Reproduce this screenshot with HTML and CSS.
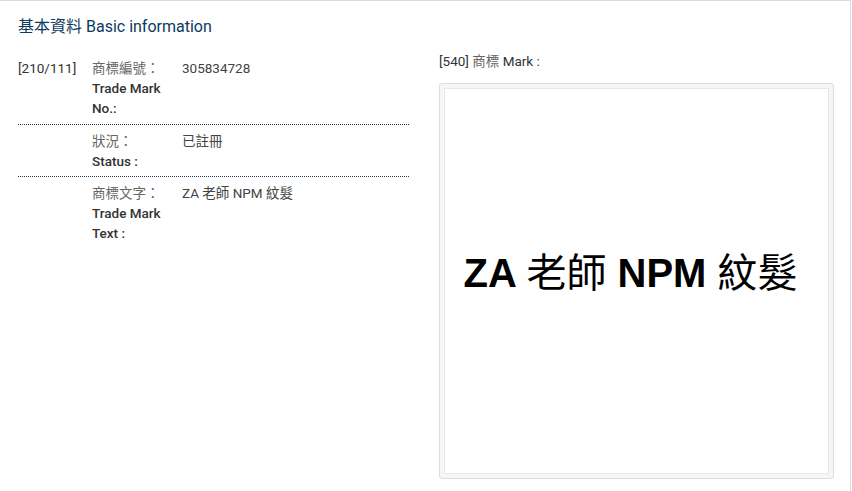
FILE: index.html
```html
<!DOCTYPE html>
<html>
<head>
<meta charset="utf-8">
<link rel="stylesheet" href="styles.css">
</head>
<body>
<div class="panel">
  <h2 class="title">基本資料 Basic information</h2>
  <div class="cols">
    <div class="left">
      <div class="row">
        <div class="code">[210/111]</div>
        <div class="label"><span class="zh">商標編號：</span><br><span class="en">Trade Mark<br>No.:</span></div>
        <div class="value">305834728</div>
      </div>
      <div class="row">
        <div class="code"></div>
        <div class="label"><span class="zh">狀況：</span><br><span class="en">Status :</span></div>
        <div class="value">已註冊</div>
      </div>
      <div class="row last">
        <div class="code"></div>
        <div class="label"><span class="zh">商標文字：</span><br><span class="en">Trade Mark<br>Text :</span></div>
        <div class="value">ZA 老師 NPM 紋髮</div>
      </div>
    </div>
    <div class="right">
      <div class="mark-label">[540] <span class="zh">商標</span> Mark :</div>
      <div class="thumb">
        <div class="thumb-inner">
          <div class="mark-text">ZA <span class="cjk">老師</span> NPM <span class="cjk">紋髮</span></div>
        </div>
      </div>
    </div>
  </div>
</div>
</body>
</html>
```
FILE: styles.css
```css
html, body {
  margin: 0;
  padding: 0;
  background: #fff;
}
body {
  font-family: Roboto, "Noto Sans CJK TC", sans-serif;
  font-size: 13.5px;
  color: #333;
}
.panel {
  width: 851px;
  height: 491px;
  border-top: 1px solid #dcdcdc;
  border-right: 1px solid #dcdcdc;
  box-sizing: border-box;
  padding: 0 0 0 18px;
}
.title {
  margin: 0;
  padding-top: 15px;
  font-size: 16px;
  line-height: 22px;
  font-weight: 400;
  color: #0d3a5e;
}
.cols {
  display: flex;
  gap: 30px;
  margin-top: 14px;
}
.left {
  width: 391px;
  padding-top: 6px;
}
.row {
  display: flex;
  line-height: 20px;
  padding: 6px 0 5px;
  border-bottom: 1px dotted #1f3a56;
}
.row:first-child {
  padding-top: 0;
  padding-bottom: 6px;
}
.row.last {
  border-bottom: none;
}
.code {
  width: 74px;
  flex: none;
}
.label {
  width: 90px;
  flex: none;
}
.zh {
  color: #666;
}
.en {
  font-weight: 500;
  color: #333;
}
.value {
  flex: 1;
  color: #444;
}
.right {
  width: 395px;
}
.mark-label {
  line-height: 20px;
  margin-top: -1px;
}
.thumb {
  margin-top: 12px;
  width: 395px;
  height: 396px;
  box-sizing: border-box;
  border: 1px solid #dcdcdc;
  border-radius: 3px;
  padding: 4px;
  background: #f6f6f6;
}
.thumb-inner {
  height: 100%;
  box-sizing: border-box;
  border: 1px solid #e8e8e8;
  background: #fff;
  display: flex;
  align-items: center;
  justify-content: center;
}
.mark-text {
  font-family: "Liberation Sans", Arial, "Noto Sans CJK TC", sans-serif;
  font-weight: 700;
  font-size: 40px;
  color: #000;
  margin-right: 12px;
  margin-top: -22px;
}
.mark-text .cjk {
  font-family: "Noto Sans CJK TC", sans-serif;
  font-weight: 400;
}
```
